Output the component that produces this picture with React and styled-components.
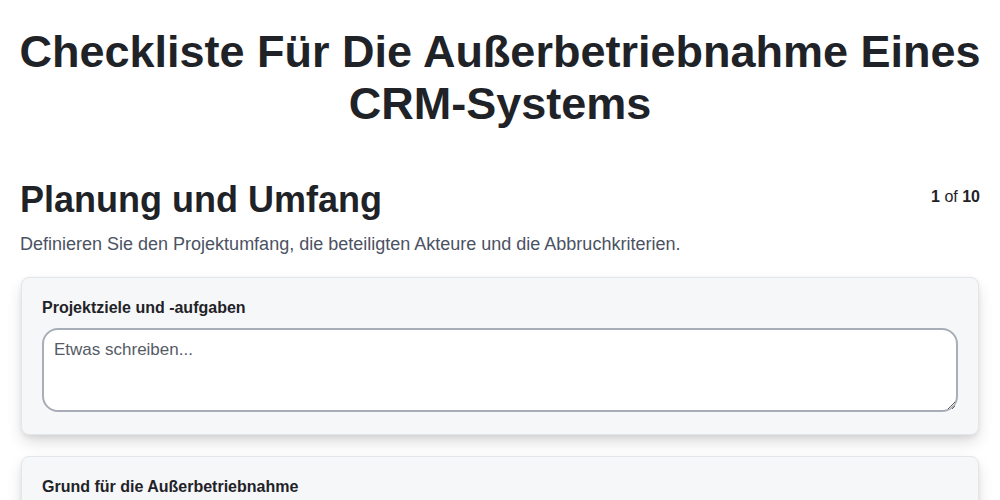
import React from 'react'
import styled, { createGlobalStyle } from 'styled-components'

const GlobalStyle = createGlobalStyle`
  body {
    margin: 0;
    background: #ffffff;
    font-family: "Liberation Sans", Arial, sans-serif;
    color: #1f2328;
  }
`

const Page = styled.div`
  padding: 26px 21px 40px 21px;
`

const Title = styled.h1`
  margin: 0 -12px 48px;
  text-align: center;
  font-size: 45px;
  line-height: 52px;
  font-weight: 700;
  color: #1f2328;
`

const SectionHeader = styled.div`
  display: flex;
  justify-content: space-between;
  align-items: flex-start;
  margin: 0 -1px;
`

const SectionTitle = styled.h2`
  margin: 0;
  font-size: 36px;
  line-height: 44px;
  font-weight: 700;
`

const Counter = styled.div`
  font-size: 16px;
  padding-top: 10px;
  color: #1f2328;
  b { font-weight: 700; }
`

const Description = styled.p`
  margin: 10px -1px 21px;
  font-size: 18px;
  line-height: 24px;
  color: #4b5263;
`

const Card = styled.div`
  background: #f6f7f9;
  border: 1px solid #e3e5e8;
  border-radius: 8px;
  padding: 20px 20px 22px;
  margin-bottom: 21px;
  box-shadow: 0 8px 16px -2px rgba(0, 0, 0, 0.16), 0 2px 5px rgba(0, 0, 0, 0.06);
`

const Label = styled.label`
  display: block;
  font-size: 16px;
  line-height: 20px;
  font-weight: 700;
  margin-bottom: 10px;
  color: #1f2328;
`

const TextArea = styled.textarea`
  display: block;
  box-sizing: border-box;
  width: 100%;
  height: 84px;
  border: 2px solid #a7aeb7;
  border-radius: 16px;
  padding: 10px 10px;
  font-family: "Liberation Sans", Arial, sans-serif;
  font-size: 17px;
  background: #ffffff;
  &::placeholder { color: #555b66; }
`

const fields = ['Projektziele und -aufgaben', 'Grund für die Außerbetriebnahme']

export default function App() {
  return (
    <>
      <GlobalStyle />
      <Page>
        <Title>Checkliste Für Die Außerbetriebnahme Eines CRM-Systems</Title>
        <SectionHeader>
          <SectionTitle>Planung und Umfang</SectionTitle>
          <Counter><b>1</b> of <b>10</b></Counter>
        </SectionHeader>
        <Description>Definieren Sie den Projektumfang, die beteiligten Akteure und die Abbruchkriterien.</Description>
        {fields.map((f) => (
          <Card key={f}>
            <Label>{f}</Label>
            <TextArea placeholder="Etwas schreiben..." />
          </Card>
        ))}
      </Page>
    </>
  )
}
